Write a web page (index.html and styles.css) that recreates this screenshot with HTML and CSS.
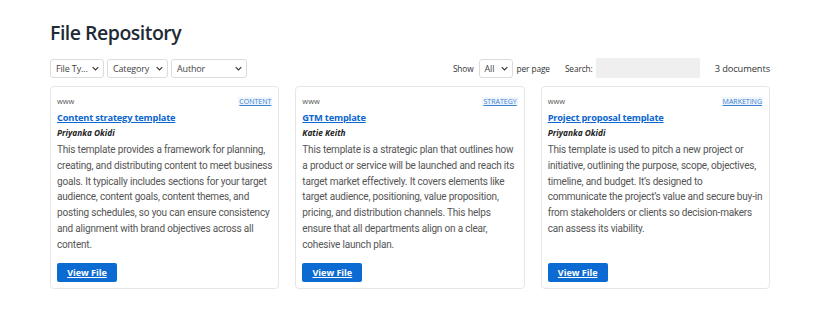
FILE: index.html
```html
<!DOCTYPE html>
<html lang="en">
<head>
<meta charset="utf-8">
<title>File Repository</title>
<link rel="stylesheet" href="styles.css">
</head>
<body>
<div class="page">
  <h1 class="title">File Repository</h1>
  <div class="toolbar">
    <div class="filters">
      <div class="select w-type"><span>File Ty...</span><svg viewBox="0 0 10 6"><path d="M1 1l4 4 4-4"/></svg></div>
      <div class="select w-cat"><span>Category</span><svg viewBox="0 0 10 6"><path d="M1 1l4 4 4-4"/></svg></div>
      <div class="select w-author"><span>Author</span><svg viewBox="0 0 10 6"><path d="M1 1l4 4 4-4"/></svg></div>
    </div>
    <div class="controls">
      <span class="label">Show</span>
      <div class="select w-show"><span>All</span><svg viewBox="0 0 10 6"><path d="M1 1l4 4 4-4"/></svg></div>
      <span class="label">per page</span>
      <span class="label search-label">Search:</span>
      <div class="search"></div>
      <span class="count">3 documents</span>
    </div>
  </div>
  <div class="cards">
    <div class="card">
      <div class="card-top"><span class="src">www</span><a class="tag" href="#">CONTENT</a></div>
      <a class="card-title" href="#">Content strategy template</a>
      <div class="author">Priyanka Okidi</div>
      <p class="desc">This template provides a framework for planning, creating, and distributing content to meet business goals. It typically includes sections for your target audience, content goals, content themes, and posting schedules, so you can ensure consistency and alignment with brand objectives across all content.</p>
      <a class="btn" href="#">View File</a>
    </div>
    <div class="card">
      <div class="card-top"><span class="src">www</span><a class="tag" href="#">STRATEGY</a></div>
      <a class="card-title" href="#">GTM template</a>
      <div class="author">Katie Keith</div>
      <p class="desc">This template is a strategic plan that outlines how a product or service will be launched and reach its target market effectively. It covers elements like target audience, positioning, value proposition, pricing, and distribution channels. This helps ensure that all departments align on a clear, cohesive launch plan.</p>
      <a class="btn" href="#">View File</a>
    </div>
    <div class="card">
      <div class="card-top"><span class="src">www</span><a class="tag" href="#">MARKETING</a></div>
      <a class="card-title" href="#">Project proposal template</a>
      <div class="author">Priyanka Okidi</div>
      <p class="desc">This template is used to pitch a new project or initiative, outlining the purpose, scope, objectives, timeline, and budget. It’s designed to communicate the project’s value and secure buy-in from stakeholders or clients so decision-makers can assess its viability.</p>
      <a class="btn" href="#">View File</a>
    </div>
  </div>
</div>
</body>
</html>
```

FILE: styles.css
```css
* { box-sizing: border-box; }
html, body { margin: 0; padding: 0; background: #fff; }
body {
  font-family: "Open Sans", "Noto Sans", sans-serif;
  color: #333;
}
.page {
  width: 720px;
  margin: 0 auto;
  padding-top: 19px;
}
.title {
  margin: 0;
  font-size: 19.5px;
  font-weight: 600;
  color: #1f2a37;
  line-height: 27px;
  letter-spacing: -0.5px;
}
.toolbar {
  display: flex;
  justify-content: space-between;
  align-items: center;
  margin-top: 12px;
}
.filters { display: flex; gap: 3px; }
.select {
  display: flex;
  align-items: center;
  justify-content: space-between;
  height: 19px;
  border: 1px solid #dcdcdc;
  border-radius: 3px;
  background: #fff;
  padding: 0 4px 0 5px;
  font-size: 9px;
  letter-spacing: -0.15px;
  color: #444;
}
.select svg {
  width: 7px;
  height: 5px;
  fill: none;
  stroke: #333;
  stroke-width: 1.6;
}
.w-type { width: 54px; }
.w-cat { width: 61px; }
.w-author { width: 76px; }
.w-show { width: 34px; margin: 0 4px 0 5px; }
.controls {
  display: flex;
  align-items: center;
  font-size: 8.3px;
  letter-spacing: -0.1px;
  color: #333;
}
.search-label { margin-left: 15px; margin-right: 3px; }
.search {
  width: 104px;
  height: 20px;
  background: #efefef;
  border-radius: 2px;
}
.count {
  margin-left: 15px;
  font-size: 9.3px;
  color: #333;
}
.cards {
  display: grid;
  grid-template-columns: repeat(3, 1fr);
  gap: 16px;
  margin-top: 8px;
}
.card {
  display: flex;
  flex-direction: column;
  align-items: flex-start;
  border: 1px solid #e6e6e6;
  border-radius: 4px;
  padding: 7px 6px 6px 6px;
  height: 203px;
}
.card-top {
  display: flex;
  justify-content: space-between;
  align-items: center;
  width: 100%;
  height: 14px;
}
.src { font-size: 7.5px; color: #555; }
.tag {
  font-size: 7px;
  color: #3b7fd0;
  text-decoration: underline;
  background: #eef5fc;
  padding: 0 1px;
}
.card-title {
  margin-top: 3px;
  font-size: 9.3px;
  font-weight: 700;
  color: #0b66d0;
  text-decoration: underline;
  line-height: 14px;
  letter-spacing: -0.2px;
}
.author {
  margin-top: 2px;
  font-size: 8.3px;
  font-weight: 700;
  font-style: italic;
  color: #222;
  line-height: 12px;
}
.desc {
  margin: 3px 0 0;
  width: 100%;
  font-family: Roboto, "Open Sans", sans-serif;
  font-size: 10px;
  line-height: 15.8px;
  letter-spacing: -0.2px;
  word-spacing: 0.06px;
  color: #555;
}
.btn {
  margin-top: auto;
  display: inline-flex;
  align-items: center;
  justify-content: center;
  width: 60px;
  height: 19px;
  background: #0b6bd3;
  border-radius: 2px;
  color: #fff;
  font-size: 9px;
  font-weight: 700;
  text-decoration: underline;
}
```
